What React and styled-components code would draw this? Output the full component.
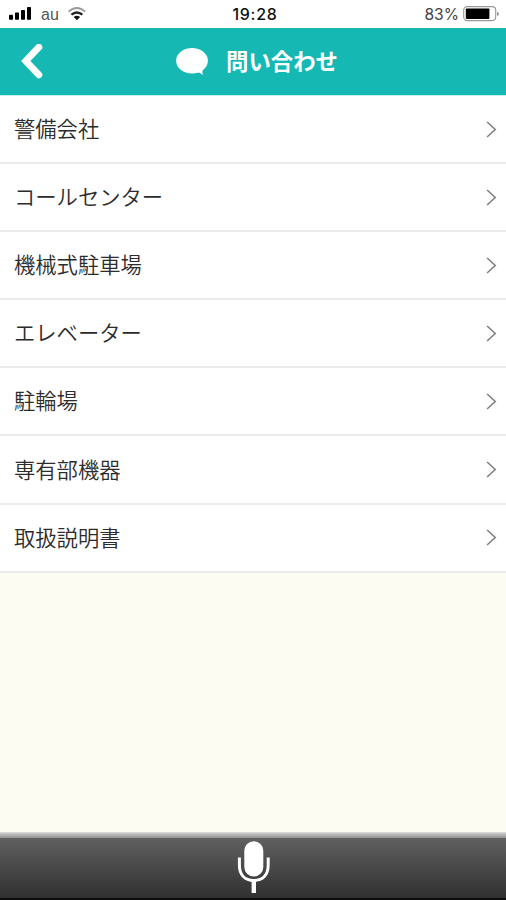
import React from "react";
import styled, { createGlobalStyle } from "styled-components";

const items = [
	"警備会社",
	"コールセンター",
	"機械式駐車場",
	"エレベーター",
	"駐輪場",
	"専有部機器",
	"取扱説明書"
];

const App = () => (
	<Screen>
		<GlobalStyle />
		<StatusBar>
			<StatusSide>
				<SignalIcon />
				<Carrier>au</Carrier>
				<WifiIcon />
			</StatusSide>
			<Clock>19:28</Clock>
			<StatusSide $right>
				<Percent>83%</Percent>
				<BatteryIcon />
			</StatusSide>
		</StatusBar>

		<Header>
			<BackButton aria-label="戻る">
				<BackIcon />
			</BackButton>
			<BubbleIcon />
			<Title>問い合わせ</Title>
		</Header>

		<List>
			{items.map(item => (
				<Row key={item}>
					<Label>{item}</Label>
					<ChevronIcon />
				</Row>
			))}
		</List>

		<Footer>
			<FooterEdge />
			<VoiceBar>
				<MicIcon />
			</VoiceBar>
		</Footer>
	</Screen>
);

export default App;

// icons -------------------------------------

const SignalIcon = () => (
	<svg width="23" height="14" viewBox="0 0 23 14">
		<rect x="0" y="7.8" width="4" height="4.9" rx="0.7" />
		<rect x="6" y="5.6" width="4" height="7.1" rx="0.7" />
		<rect x="12" y="3" width="4" height="9.7" rx="0.7" />
		<rect x="18" y="0" width="4" height="12.7" rx="0.7" />
	</svg>
);

const WifiIcon = () => (
	<svg width="19" height="14" viewBox="0 0 19 14" fill="none" strokeWidth="2.4">
		<path d="M0.6 4.6Q8.9 -2.6 17.2 4.6" stroke="#999" strokeWidth="1.8" />
		<path d="M3.4 7.6Q8.9 3.2 14.4 7.6" stroke="#222" />
		<path d="M5.7 10Q8.9 7.7 12.1 10L8.9 13.2Z" fill="#111" />
	</svg>
);

const BatteryIcon = () => (
	<svg width="37" height="16" viewBox="0 0 37 16">
		<rect x="0.7" y="0.6" width="32" height="14" rx="3.5" fill="none" stroke="#999" strokeWidth="1.1" />
		<rect x="2.8" y="2.5" width="23.6" height="10.4" rx="0.8" />
		<path d="M34 5.8Q36 6 36 8Q36 9.6 34 10Z" fill="#999" />
	</svg>
);

const BackIcon = () => (
	<svg width="23" height="36" viewBox="0 0 23 36">
		<path d="M17.9 3.2L4.8 17L17.9 30.8" fill="none" stroke="#fff" strokeWidth="6.8" strokeLinecap="round" strokeLinejoin="miter" />
	</svg>
);

const BubbleIcon = () => (
	<svg width="33" height="28" viewBox="0 0 33 28" fill="#fff">
		<ellipse cx="16" cy="12.8" rx="15.9" ry="12.8" />
		<path d="M19 24Q24 24.2 27.2 27C26 25 26.2 23.3 27.5 20Z" />
	</svg>
);

const ChevronIcon = () => (
	<svg width="11" height="17" viewBox="0 0 11 17">
		<path d="M1.1 1L9.2 8.5L1.1 16" fill="none" stroke="#808080" strokeWidth="1.6" />
	</svg>
);

const MicIcon = () => (
	<svg width="34" height="54" viewBox="0 0 34 54">
		<rect x="8.3" y="0.2" width="19" height="35.4" rx="9.5" fill="#fff" />
		<path d="M3.4 16.6V24C3.4 34 9 39.4 17.8 39.4S32.2 34 32.2 24V16.6" fill="none" stroke="#fff" strokeWidth="3" />
		<path d="M17.8 39V52" stroke="#fff" strokeWidth="4.4" />
	</svg>
);

// styled components -------------------------

const GlobalStyle = createGlobalStyle`
	body {
		margin: 0;
	}

	* {
		box-sizing: border-box;
	}

	svg {
		display: block;
		flex: none;
	}
`;

const Screen = styled.div`
	display: flex;
	flex-direction: column;
	height: 100vh;
	overflow: hidden;
	background: #fcfcf2;
	font-family: "Liberation Sans", "Noto Sans CJK JP", sans-serif;
`;

const StatusBar = styled.div`
	display: grid;
	grid-template-columns: 1fr auto 1fr;
	align-items: center;
	height: 28px;
	padding: 0 6px 0 9px;
	background: #fff;
	color: #111;
`;

const StatusSide = styled.div`
	display: flex;
	align-items: center;
	justify-content: ${props => (props.$right ? "flex-end" : "flex-start")};
	gap: ${props => (props.$right ? "4px" : "9px")};
`;

const Carrier = styled.span`
	padding-top: 1px;
	color: #555;
	font-size: 16px;
	line-height: 27px;
`;

const Clock = styled.span`
	padding-left: 1px;
	font-family: Inter, sans-serif;
	font-size: 16px;
	font-weight: 500;
	letter-spacing: 0.7px;
	line-height: 26px;
`;

const Percent = styled.span`
	color: #444;
	font-family: Inter, sans-serif;
	font-size: 15.6px;
`;

const Header = styled.header`
	display: flex;
	align-items: center;
	height: 68px;
	border-bottom: 1px solid #bdf0ed;
	background: #16b8b3;
	background-clip: padding-box;
	color: #fff;
`;

const BackButton = styled.button`
	display: flex;
	width: 176px;
	padding: 0 0 0 21px;
	border: 0;
	background: none;
`;

const Title = styled.h1`
	margin: 0 0 3px 17px;
	font-family: "Noto Sans CJK JP", sans-serif;
	font-size: 22.4px;
	font-weight: 700;
	line-height: 32px;
`;

const List = styled.ul`
	margin: 0;
	padding: 0;
	list-style: none;
`;

const Row = styled.li`
	display: flex;
	align-items: center;
	justify-content: space-between;
	height: 68.1px;
	padding: 0 9px 0 14px;
	border-bottom: 2px solid #ebebeb;
	background: #fff;
`;

const Label = styled.span`
	margin-bottom: 2px;
	color: #2c2c2c;
	font-family: "Noto Sans CJK JP", sans-serif;
	font-size: 21.3px;
	font-weight: 350;
	line-height: 32px;
`;

const Footer = styled.footer`
	margin-top: auto;
`;

const FooterEdge = styled.div`
	height: 6px;
	background: linear-gradient(#dededb, #b5b5b5 45%, #919191);
`;

const VoiceBar = styled.div`
	display: flex;
	align-items: center;
	justify-content: center;
	height: 62px;
	border-bottom: 2px solid #0c0c0c;
	background: linear-gradient(#606060, #303030);
`;
